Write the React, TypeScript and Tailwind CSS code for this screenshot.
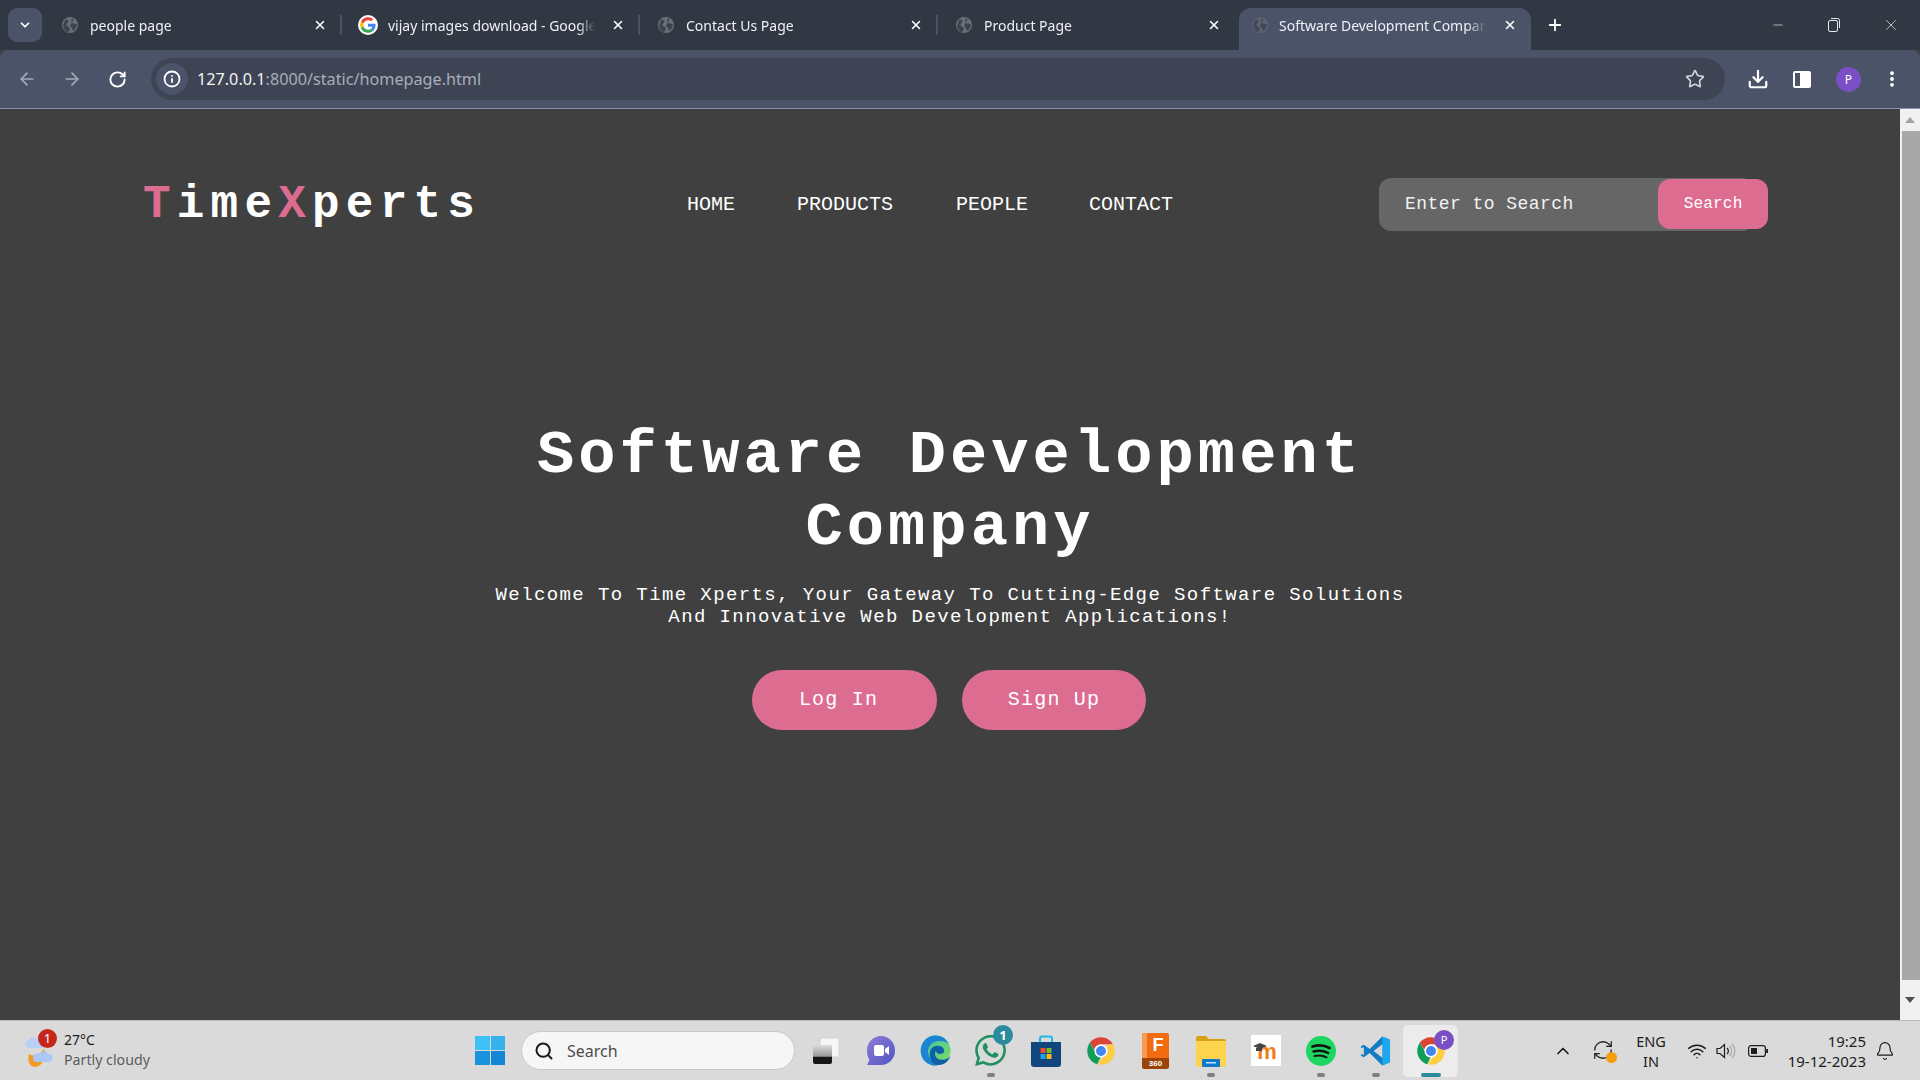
import React from "react";
import { ArrowLeft, ArrowRight, RotateCw, RefreshCw, Info, Star, Download, ChevronDown, ChevronUp, X, Plus, Minus, MoreVertical, Search, Bell, Wifi } from "lucide-react";
import { SiWhatsapp } from "react-icons/si";

const ui = "font-['Noto_Sans','Open_Sans',sans-serif]";
const mono = "font-['Liberation_Mono','Courier_New',monospace]";

function Globe({ className = "" }: { className?: string }) {
  return (
    <svg viewBox="0 0 16 16" className={`w-[16px] h-[16px] shrink-0 ${className}`}>
      <circle cx="8" cy="8" r="8" fill="#6b6f78" />
      <path d="M3 2.5c2 0 3.5.6 3.5 2S5 6 4.5 7.5 6.500 9.500 7.500 10.500 7 14 6 15 2 13 1 9zM10 1c2 1.500 1.500 2.500.5 3.500s-.5 2 1 2 3.500.5 3.500 1.500-1.500 4-3 5.500-1.500-2-2.500-3-2-2-.5-3.500S8.500 3 10 1z" fill="#3e424c" />
    </svg>
  );
}

function GoogleG() {
  return (
    <svg viewBox="0 0 48 48" className="w-[20px] h-[20px] shrink-0 rounded-full bg-white p-[2px]">
      <path fill="#EA4335" d="M24 9.500c3.500 0 6.700 1.200 9.200 3.600l6.900-6.900C35.900 2.400 30.500 0 24 0 14.600 0 6.500 5.400 2.600 13.200l8 6.200C12.400 13.700 17.700 9.500 24 9.500z" />
      <path fill="#4285F4" d="M46.900 24.500c0-1.600-.1-3.100-.4-4.500H24v9h12.900c-.6 3-2.200 5.500-4.800 7.200l7.700 6c4.500-4.200 7.100-10.300 7.100-17.700z" />
      <path fill="#FBBC05" d="M10.500 28.600c-.5-1.400-.8-3-.8-4.600s.3-3.200.8-4.600l-8-6.200C.9 16.500 0 20.100 0 24s.9 7.500 2.600 10.800z" />
      <path fill="#34A853" d="M24 48c6.500 0 11.900-2.100 15.900-5.800l-7.700-6c-2.200 1.500-5 2.300-8.200 2.300-6.300 0-11.600-4.200-13.500-9.900l-8 6.200C6.500 42.600 14.600 48 24 48z" />
    </svg>
  );
}

function Tab({ title, icon, sep = true }: { title: string; icon: React.ReactNode; sep?: boolean }) {
  return (
    <div className="w-[298px] h-[34px] shrink-0 flex items-center relative pl-[18px] pr-[15px]">
      <div className="w-[16px] flex justify-center mr-[12px]">{icon}</div>
      <span className="w-[207px] whitespace-nowrap overflow-hidden text-[14px] text-[#eef0f4] [mask-image:linear-gradient(to_right,black_92%,transparent)]">{title}</span>
      <X className="w-[14px] h-[14px] ml-auto text-white" strokeWidth={2.6} />
      {sep && <div className="absolute right-0 top-[7px] w-[2px] h-[20px] bg-[#4a5265]" />}
    </div>
  );
}

function ChromeIcon({ size = 30 }: { size?: number }) {
  return (
    <svg viewBox="0 0 48 48" style={{ width: size, height: size }}>
      <path fill="#DB4437" d="M24 2c8.200 0 15.300 4.500 19.100 11H24c-5.300 0-9.700 3.800-10.700 8.800L6.200 10.400C10.200 5.300 16.700 2 24 2z" />
      <path fill="#0F9D58" d="M6.200 10.400 15.700 27c1.800 3.300 5 5.500 8.300 5.900l-6 12.300C8.800 42.500 2 34 2 24c0-5.100 1.600-9.800 4.200-13.600z" />
      <path fill="#FFCD40" d="M43.100 13c1.900 3.200 2.900 7 2.900 11 0 12.100-9.800 22-22 22l-5.300-.8 9.500-13.500c3.500-1.400 6.300-4.900 6.300-8.700 0-3-1.800-6.200-4-8z" />
      <circle cx="24" cy="24" r="10.500" fill="#fff" />
      <circle cx="24" cy="24" r="8" fill="#4285F4" />
    </svg>
  );
}

function TaskIcon({ children, dot = false, active = false }: { children: React.ReactNode; dot?: boolean; active?: boolean }) {
  return (
    <div className={`w-[55px] h-[52px] flex items-center justify-center relative shrink-0 rounded-[5px] ${active ? "bg-[#ececec]" : ""}`}>
      {children}
      {dot && <div className="absolute bottom-[0px] w-[8px] h-[4px] rounded-full bg-[#7f7f7f]" />}
      {active && <div className="absolute bottom-[0px] w-[20px] h-[4px] rounded-full bg-[#2b8a9d]" />}
    </div>
  );
}

function WinLogo() {
  return (
    <div className="w-[30px] h-[29px] grid grid-cols-2 gap-[1px]">
      <div className="bg-[#3fc1f5]" />
      <div className="bg-[#35b2ee]" />
      <div className="bg-[#1a93df]" />
      <div className="bg-[#1585d6]" />
    </div>
  );
}

function TaskView() {
  return (
    <svg viewBox="0 0 30 30" className="w-[30px] h-[30px]">
      <defs>
        <linearGradient id="tv" x1="0" y1="0" x2="0" y2="1">
          <stop offset="0" stopColor="#dcdcdc" />
          <stop offset="0.6" stopColor="#9a9a9a" />
          <stop offset="0.62" stopColor="#161616" />
          <stop offset="1" stopColor="#161616" />
        </linearGradient>
      </defs>
      <rect x="9" y="2" width="19" height="19" rx="2" fill="#f6f6f6" stroke="#d4d4d4" />
      <rect x="2" y="9" width="19" height="19" rx="2" fill="url(#tv)" />
    </svg>
  );
}

function Chat() {
  return (
    <svg viewBox="0 0 30 32" className="w-[30px] h-[32px]">
      <defs>
        <linearGradient id="chat" x1="0" y1="0" x2="1" y2="1">
          <stop offset="0" stopColor="#8f7bd8" />
          <stop offset="1" stopColor="#4f55c4" />
        </linearGradient>
      </defs>
      <path d="M15 1c8 0 14 6.500 14 14.500S23 30 15 30H1l2.500-5C1.800 22.500 1 19 1 15.500 1 7.500 7 1 15 1z" fill="url(#chat)" />
      <rect x="8" y="10" width="10" height="11" rx="2" fill="#fff" />
      <path d="m19 14 4-3v9l-4-3z" fill="#fff" />
    </svg>
  );
}

function Edge() {
  return (
    <svg viewBox="0 0 32 32" className="w-[31px] h-[31px]">
      <defs>
        <linearGradient id="e1" x1="0" y1="0" x2="1" y2="1">
          <stop offset="0" stopColor="#39c5b0" />
          <stop offset="1" stopColor="#7fdc5b" />
        </linearGradient>
      </defs>
      <circle cx="16" cy="16" r="15.500" fill="url(#e1)" />
      <path d="M1 15C2 6 8 .5 16 .5c6 0 11 3 13.500 8.500C24 5 14 5 9.500 12 7 16 8 24 15 29.500c1 .8 2 1.500 3 2C8 32.500 0 25 1 15z" fill="#1b84d4" />
      <path d="M10 20c0-5 3-9 8-9 5 0 7 3 7 5.500 0 2-2 3-4.500 3-3.500 0-4-3-4-3-2 2-1.500 8 5 9 4 .6 8-1 10-4-2 6-7 10-13 9.500C13 30.500 10 25 10 20z" fill="#0f5fa8" />
    </svg>
  );
}

function Store() {
  return (
    <svg viewBox="0 0 30 32" className="w-[30px] h-[32px]">
      <path d="M9 7V3.500a2 2 0 0 1 2-2h8a2 2 0 0 1 2 2V7" fill="none" stroke="#1fb6ea" strokeWidth="2" />
      <path d="M0 7h30v22a3 3 0 0 1-3 3H3a3 3 0 0 1-3-3z" fill="#11457e" />
      <rect x="9.500" y="13" width="5" height="5" fill="#e8502f" />
      <rect x="15.500" y="13" width="5" height="5" fill="#7fba2c" />
      <rect x="9.500" y="19" width="5" height="5" fill="#1ca1e6" />
      <rect x="15.500" y="19" width="5" height="5" fill="#fdb813" />
    </svg>
  );
}

function F360() {
  return (
    <div className="w-[27px] h-[36px] rounded-[2px] overflow-hidden flex flex-col">
      <div className="h-[25px] bg-[#f26b10] flex items-center justify-center text-white font-bold text-[18px] font-['Liberation_Sans',sans-serif] border-l-[5px] border-[#f99a52]">F</div>
      <div className="h-[11px] bg-[#9c4408] text-white text-[8px] font-bold leading-[11px] text-center font-['Liberation_Sans',sans-serif]">360</div>
    </div>
  );
}

function Folder() {
  return (
    <svg viewBox="0 0 30 32" className="w-[30px] h-[32px]">
      <path d="M0 3a2 2 0 0 1 2-2h8l3 3h15a2 2 0 0 1 2 2v4H0z" fill="#d7a114" />
      <path d="M0 6h30v24a2 2 0 0 1-2 2H2a2 2 0 0 1-2-2z" fill="#fcd34d" />
      <rect x="6" y="24" width="18" height="8" rx="1" fill="#0f78c9" />
      <rect x="10" y="27" width="10" height="1.500" fill="#bfe3f8" />
    </svg>
  );
}

function Moodle() {
  return (
    <div className="w-[30px] h-[31px] bg-white flex items-center justify-center relative">
      <span className="text-[#f07c1b] font-bold text-[22px] leading-none font-['Liberation_Sans',sans-serif] mt-[3px] ml-[3px]">m</span>
      <svg viewBox="0 0 14 8" className="absolute left-[2px] top-[8px] w-[14px] h-[8px]">
        <path d="M0 3 7 0l7 3-7 3z" fill="#444" />
        <path d="M3 5h6v3H3z" fill="#444" />
      </svg>
    </div>
  );
}

function Spotify() {
  return (
    <svg viewBox="0 0 30 30" className="w-[30px] h-[30px]">
      <circle cx="15" cy="15" r="15" fill="#1ed760" />
      <path d="M6.500 10.500c5.500-1.600 12-1.200 17 1.500" fill="none" stroke="#141414" strokeWidth="2.800" strokeLinecap="round" />
      <path d="M7.500 15.500c5-1.300 10.500-.8 14.700 1.500" fill="none" stroke="#141414" strokeWidth="2.400" strokeLinecap="round" />
      <path d="M8.500 20c4-1 8.500-.6 12 1.300" fill="none" stroke="#141414" strokeWidth="2" strokeLinecap="round" />
    </svg>
  );
}

function VSCode() {
  return (
    <svg viewBox="0 0 32 32" className="w-[31px] h-[32px]">
      <path d="M23 1 10 14 4 9.500 1 11v10l3 1.500L10 18l13 13 8-3.500V4.500z" fill="#0f7cc4" />
      <path d="M23 1l8 3.500v23L23 31z" fill="#1ea7ee" />
      <path d="M23 9v14l-9-7z" fill="#d8d8d8" />
      <path d="M1 13l3-1v8l-3-1z" fill="#d8d8d8" />
    </svg>
  );
}

function Weather() {
  return (
    <div className="relative w-[34px] h-[36px] shrink-0">
      <svg viewBox="0 0 34 36" className="w-[34px] h-[36px]">
        <path d="M12 6a4 4 0 0 1 7 2 4 4 0 0 1 0 7H6a4 4 0 0 1-1-8 4 4 0 0 1 7-1z" fill="#b9cff5" />
        <path d="M5 21c4 3 11 1 15-5 3 6-1 18-9 18-5 0-8-6-6-13z" fill="#f29b22" />
        <path d="M17 20a4 4 0 0 1 7 1 4 4 0 0 1 1 8H13a4 4 0 0 1 0-8 4 4 0 0 1 4-1z" fill="#a9c8f6" />
      </svg>
      <div className={`absolute left-[14px] top-[-4px] w-[19px] h-[19px] rounded-full bg-[#c4281c] text-white text-[13px] leading-[19px] text-center ${ui}`}>1</div>
    </div>
  );
}

export default function App() {
  return (
    <div className={`w-[1920px] h-[1080px] flex flex-col overflow-hidden bg-[#404040] ${ui}`}>
      {/* tab strip */}
      <div className="h-[50px] shrink-0 bg-[#323744] flex items-end relative">
        <div className="flex items-center h-[50px] pl-[8px] w-[44px] shrink-0">
          <div className="w-[34px] h-[34px] rounded-[9px] bg-[#4a5368] flex items-center justify-center">
            <ChevronDown className="w-[14px] h-[14px] text-white" strokeWidth={3} />
          </div>
        </div>
        <div className="flex h-[34px] self-start mt-[8px]">
          <Tab title="people page" icon={<Globe />} />
          <Tab title="vijay images download - Google Search" icon={<GoogleG />} />
          <Tab title="Contact Us Page" icon={<Globe />} />
          <Tab title="Product Page" icon={<Globe />} sep={false} />
        </div>
        <div className="w-[292px] h-[42px] shrink-0 self-end rounded-t-[12px] bg-[#4a5368] flex items-start pt-[9px] pl-[13px] pr-[14px] ml-[3px]">
          <Globe className="opacity-60 mt-[0px]" />
          <span className="ml-[11px] w-[208px] whitespace-nowrap overflow-hidden text-[14px] leading-[17px] text-[#eef0f4] [mask-image:linear-gradient(to_right,black_90%,transparent)]">Software Development Company</span>
          <X className="w-[14px] h-[14px] ml-auto mt-[1px] text-white" strokeWidth={2.6} />
        </div>
        <div className="h-[50px] flex items-center ml-[15px]">
          <Plus className="w-[18px] h-[18px] text-white" strokeWidth={2.4} />
        </div>
        <div className="ml-auto h-[50px] flex items-center text-[#e8e8e8]">
          <div className="w-[56px] flex justify-center"><Minus className="w-[14px] h-[14px]" strokeWidth={1.2} /></div>
          <div className="w-[56px] flex justify-center relative">
            <svg viewBox="0 0 12 14" className="w-[12px] h-[14px]" fill="none" stroke="#e8e8e8" strokeWidth="1">
              <rect x="0.500" y="2.500" width="9" height="11" rx="1.500" />
              <path d="M3 .5h6.500a2 2 0 0 1 2 2V10" />
            </svg>
          </div>
          <div className="w-[58px] flex justify-center"><X className="w-[18px] h-[18px]" strokeWidth={1} /></div>
        </div>
      </div>

      {/* toolbar */}
      <div className="h-[59px] shrink-0 bg-[#4a5368] border-b border-[#8d93a3] flex items-center pl-[17px] pr-[6px] rounded-t-[8px]">
        <ArrowLeft className="w-[20px] h-[20px] text-[#a5abb8]" strokeWidth={2} />
        <ArrowRight className="w-[20px] h-[20px] text-[#a5abb8] ml-[25px]" strokeWidth={2} />
        <RotateCw className="w-[19px] h-[19px] text-white ml-[26px]" strokeWidth={2.4} />
        <div className="ml-[24px] w-[1574px] h-[42px] rounded-full bg-[#3e4453] flex items-center shrink-0 pl-[5px] pr-[20px]">
          <div className="w-[32px] h-[32px] rounded-full bg-[#4a5368] flex items-center justify-center">
            <Info className="w-[18px] h-[18px] text-white" strokeWidth={2.4} />
          </div>
          <span className="ml-[9px] text-[16.200px] text-[#f2f3f5]">127.0.0.1<span className="text-[#a9aeba]">:8000/static/homepage.html</span></span>
          <Star className="w-[20px] h-[20px] ml-auto text-[#d0d3da]" strokeWidth={2} />
        </div>
        <Download className="w-[22px] h-[22px] text-white ml-[22px] shrink-0" strokeWidth={2.4} />
        <div className="ml-[24px] w-[18px] h-[17px] rounded-[2px] border-2 border-white flex justify-end shrink-0">
          <div className="w-[9px] bg-white" />
        </div>
        <div className="ml-[25px] w-[25px] h-[25px] rounded-full bg-[#7b4fc4] text-white text-[12px] leading-[25px] text-center shrink-0">P</div>
        <MoreVertical className="w-[20px] h-[20px] text-white ml-[21px] shrink-0" strokeWidth={2.6} />
      </div>

      {/* viewport */}
      <div className="flex-1 flex min-h-0">
        <main className={`flex-1 min-w-0 bg-[#404040] text-white ${mono}`}>
          <header className="flex items-center pt-[69px] pl-[143px]">
            <div className="w-[544px] h-[53px] text-[46px] font-bold tracking-[6.200px] leading-[55px]">
              <span className="text-[#dc6d91]">T</span>ime<span className="text-[#dc6d91]">X</span>perts
            </div>
            <nav className="flex text-[20px] leading-[24px]">
              <span>HOME</span>
              <span className="ml-[62px]">PRODUCTS</span>
              <span className="ml-[63px]">PEOPLE</span>
              <span className="ml-[61px]">CONTACT</span>
            </nav>
            <div className="ml-[206px] w-[389px] h-[53px] flex relative">
              <div className="w-[375px] h-[53px] rounded-[12px] bg-[#666666] pl-[26px] text-[18px] tracking-[0.450px] leading-[52px] text-[#f2f2f2]">Enter to Search</div>
              <div className="absolute right-0 top-[1px] w-[110px] h-[50px] rounded-[12px] bg-[#dc6d91] text-center text-[16px] tracking-[0.200px] leading-[51px]">Search</div>
            </div>
          </header>

          <section className="mt-[189px] flex flex-col items-center text-center">
            <h1 className="w-[900px] text-[62px] leading-[72px] font-bold tracking-[4.100px]">Software Development Company</h1>
            <p className="w-[960px] mt-[20px] text-[19px] leading-[22px] tracking-[1.400px]">Welcome To Time Xperts, Your Gateway To Cutting-Edge Software Solutions And Innovative Web Development Applications!</p>
            <div className="mt-[42px] -ml-[2px] flex gap-[25px]">
              <div className="w-[185px] h-[60px] rounded-[30px] bg-[#dc6d91] text-[20px] tracking-[1.200px] leading-[60px] pr-[12px]">Log In</div>
              <div className="w-[184px] h-[60px] rounded-[30px] bg-[#dc6d91] text-[20px] tracking-[1.200px] leading-[60px]">Sign Up</div>
            </div>
          </section>
        </main>

        <div className="w-[20px] shrink-0 bg-[#f1f1f1] flex flex-col">
          <div className="h-[22px] flex items-center justify-center">
            <div className="w-0 h-0 border-x-[5px] border-x-transparent border-b-[6px] border-b-[#a3a3a3]" />
          </div>
          <div className="h-[849px] ml-[2px] bg-[#a8a8a8]" />
          <div className="flex-1 flex items-center justify-center">
            <div className="w-0 h-0 border-x-[5px] border-x-transparent border-t-[6px] border-t-[#505050]" />
          </div>
        </div>
      </div>

      {/* taskbar */}
      <footer className="h-[60px] shrink-0 bg-[#dadada] border-t border-[#b8b8b8] flex items-center text-[#1a1a1a]">
        <div className="w-[475px] shrink-0 flex items-center pl-[24px]">
          <Weather />
          <div className="ml-[6px] flex flex-col -mt-[2px]">
            <span className="text-[14px] leading-[20px] text-[#1c1c1c]">27°C</span>
            <span className="text-[14.200px] leading-[20px] text-[#5c5c5c]">Partly cloudy</span>
          </div>
        </div>
        <WinLogo />
        <div className="ml-[16px] w-[274px] h-[39px] rounded-full bg-[#f6f6f6] border border-[#c8c8c8] flex items-center pl-[12px] shrink-0">
          <Search className="w-[20px] h-[20px] text-[#1a1a1a]" strokeWidth={2.4} />
          <span className="ml-[13px] text-[16px] text-[#4c4c4c]">Search</span>
        </div>
        <div className="flex items-center ml-[3px]">
          <TaskIcon><TaskView /></TaskIcon>
          <TaskIcon><Chat /></TaskIcon>
          <TaskIcon><Edge /></TaskIcon>
          <TaskIcon dot>
            <SiWhatsapp className="w-[31px] h-[31px] text-[#1f8f5f]" />
            <div className="absolute right-[5px] top-[0px] w-[20px] h-[20px] rounded-full bg-[#2b8a9d] text-white text-[13px] leading-[20px] text-center font-bold">1</div>
          </TaskIcon>
          <TaskIcon><Store /></TaskIcon>
          <TaskIcon><ChromeIcon /></TaskIcon>
          <TaskIcon><F360 /></TaskIcon>
          <TaskIcon dot><Folder /></TaskIcon>
          <TaskIcon><Moodle /></TaskIcon>
          <TaskIcon dot><Spotify /></TaskIcon>
          <TaskIcon dot><VSCode /></TaskIcon>
          <TaskIcon active>
            <ChromeIcon />
            <div className="absolute right-[4px] top-[5px] w-[20px] h-[20px] rounded-full bg-[#7b4fc4] text-white text-[11px] leading-[20px] text-center">P</div>
          </TaskIcon>
        </div>
        <ChevronUp className="w-[20px] h-[20px] ml-[95px] text-[#1a1a1a] shrink-0" strokeWidth={2} />
        <div className="ml-[19px] w-[24px] h-[24px] relative shrink-0">
          <RefreshCw className="w-[22px] h-[22px] text-[#222]" strokeWidth={1.4} />
          <div className="absolute right-[-1px] bottom-[0px] w-[11px] h-[11px] rounded-full bg-[#f59e0b]" />
        </div>
        <div className="ml-[17px] w-[36px] text-center text-[14.500px] leading-[20px] text-[#1c1c1c] shrink-0">ENG<br />IN</div>
        <Wifi className="w-[20px] h-[20px] ml-[18px] text-[#1c1c1c] shrink-0" strokeWidth={1.8} />
        <svg viewBox="0 0 20 16" className="w-[20px] h-[16px] ml-[9px] shrink-0" fill="none" stroke="#1c1c1c" strokeWidth="1.200">
          <path d="M1 5.500h3L8.500 1.500v13L4 10.500H1z" />
          <path d="M11 5a4 4 0 0 1 0 6" />
          <path d="M13.500 3a7 7 0 0 1 0 10M16 1a10 10 0 0 1 0 14" stroke="#a8a8a8" />
        </svg>
        <svg viewBox="0 0 20 12" className="w-[20px] h-[12px] ml-[12px] shrink-0">
          <rect x="0.600" y="0.600" width="16.800" height="10.800" rx="2.500" fill="none" stroke="#1c1c1c" strokeWidth="1.200" />
          <rect x="3" y="3" width="6" height="6" fill="#1c1c1c" />
          <rect x="18.200" y="4" width="1.800" height="4" fill="#1c1c1c" />
        </svg>
        <div className="ml-[11px] w-[87px] shrink-0 text-right text-[15px] leading-[20px] text-[#1c1c1c] whitespace-nowrap">19:25<br />19-12-2023</div>
        <Bell className="w-[20px] h-[20px] ml-[9px] text-[#1c1c1c] shrink-0" strokeWidth={1.4} />
      </footer>
    </div>
  );
}
